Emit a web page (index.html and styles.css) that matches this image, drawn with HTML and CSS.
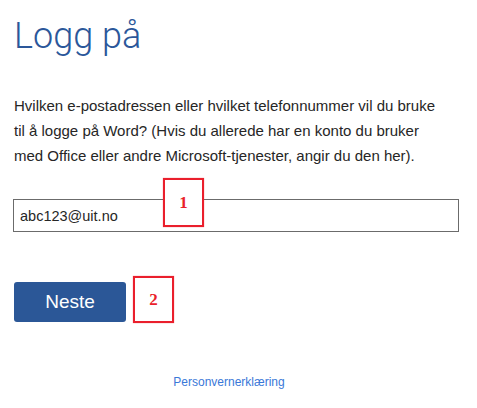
FILE: index.html
```html
<!DOCTYPE html>
<html lang="no">
<head>
<meta charset="utf-8">
<title>Logg på</title>
<link rel="stylesheet" href="styles.css">
</head>
<body>
<main class="page">
  <h1 class="title">Logg på</h1>
  <p class="intro">Hvilken e-postadressen eller hvilket telefonnummer vil du bruke<br>til å logge på Word? (Hvis du allerede har en konto du bruker<br>med Office eller andre Microsoft-tjenester, angir du den her).</p>
  <div class="field-wrap">
    <input class="field" type="text" value="abc123@uit.no">
    <span class="marker marker-one">1</span>
  </div>
  <div class="actions">
    <button class="btn" type="button">Neste</button>
    <span class="marker marker-two">2</span>
  </div>
  <footer class="footer">
    <a class="link" href="#">Personvernerklæring</a>
  </footer>
</main>
</body>
</html>
```
FILE: styles.css
```css
html, body {
  margin: 0;
  padding: 0;
  background: #ffffff;
}

.page {
  padding: 0 18px 0 13px;
  font-family: "Liberation Sans", Arial, sans-serif;
  color: #262626;
}

.title {
  margin: 18px 0 0 1px;
  font-family: Roboto, "Liberation Sans", sans-serif;
  font-weight: 300;
  font-size: 36px;
  line-height: 36px;
  color: #2b579a;
}

.intro {
  margin: 39px 0 0 1px;
  font-size: 15px;
  line-height: 25px;
  white-space: nowrap;
  color: #262626;
}

.field-wrap {
  position: relative;
  margin-top: 31px;
}

.field {
  display: block;
  box-sizing: border-box;
  width: 100%;
  height: 33px;
  margin: 0;
  padding: 0 6px;
  border: 1px solid #6b6b6b;
  border-radius: 0;
  font-family: "Liberation Sans", Arial, sans-serif;
  font-size: 14.5px;
  color: #262626;
  outline: none;
}

.marker {
  position: absolute;
  box-sizing: border-box;
  width: 41px;
  height: 49px;
  border: 2px solid #ea1f2c;
  background: #ffffff;
  color: #ea1f2c;
  font-family: "Liberation Serif", "Times New Roman", serif;
  font-weight: bold;
  font-size: 17px;
  display: flex;
  align-items: center;
  justify-content: center;
  box-shadow: 0 0 1px rgba(234, 31, 44, 0.6);
}

.marker-one {
  left: 150px;
  top: -21px;
}

.actions {
  position: relative;
  margin-top: 50px;
  display: flex;
}

.btn {
  width: 112px;
  height: 40px;
  margin-left: 1px;
  border: none;
  border-radius: 3px;
  background: #2b5797;
  color: #ffffff;
  font-family: "Liberation Sans", Arial, sans-serif;
  font-size: 19px;
  padding: 0;
  cursor: pointer;
}

.marker-two {
  left: 120px;
  top: -6px;
  height: 47px;
}

.footer {
  margin-top: 50px;
  text-align: center;
  padding-right: 14px;
}

.link {
  font-size: 12px;
  color: #3a78d8;
  text-decoration: none;
}
```
